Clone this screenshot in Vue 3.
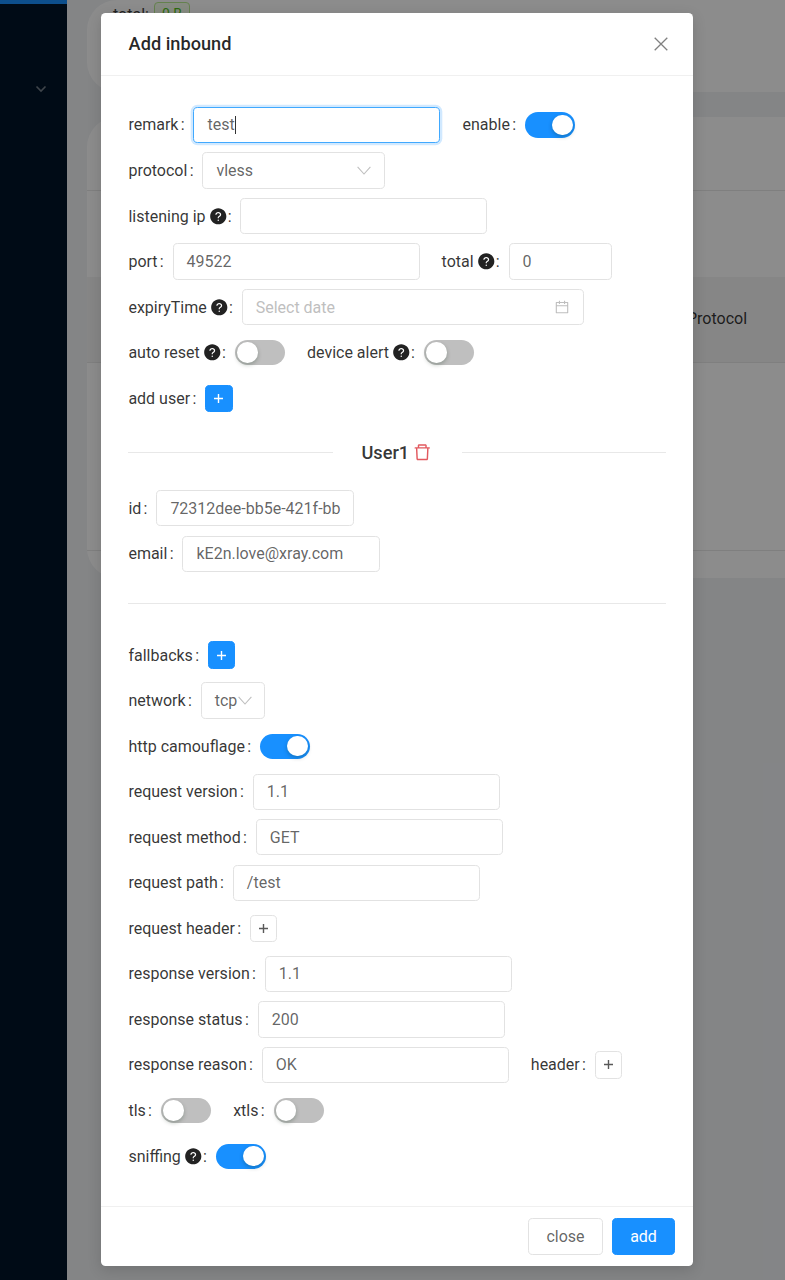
<script setup>
const helpPath = 'M512 64C264.6 64 64 264.6 64 512s200.6 448 448 448 448-200.6 448-448S759.4 64 512 64zm0 708c-22.1 0-40-17.9-40-40s17.9-40 40-40 40 17.9 40 40-17.9 40-40 40zm62.9-219.5a48.3 48.3 0 0 0-30.9 44.8V620c0 4.4-3.6 8-8 8h-48c-4.4 0-8-3.6-8-8v-21.5c0-23.1 6.7-45.9 19.9-64.9 12.9-18.6 30.9-32.8 52.1-40.9 34-13.1 56-41.6 56-72.7 0-44.1-43.1-80-96-80s-96 35.9-96 80v7.6c0 4.4-3.6 8-8 8h-48c-4.4 0-8-3.6-8-8V420c0-39.3 17.2-76 48.4-103.3C430.4 290.4 470 276 512 276s81.6 14.5 111.6 40.7C654.8 344 672 380.7 672 420c0 57.8-38.1 109.8-97.1 132.5z'
const trashPath = 'M360 184h-8c4.4 0 8-3.6 8-8v8h304v-8c0 4.4 3.6 8 8 8h-8v72h72v-80c0-35.3-28.7-64-64-64H352c-35.3 0-64 28.7-64 64v80h72v-72zm504 72H160c-17.7 0-32 14.3-32 32v32c0 4.4 3.6 8 8 8h60.4l24.7 523c1.6 34.1 29.8 61 63.9 61h454c34.2 0 62.3-26.8 63.9-61l24.7-523H888c4.4 0 8-3.6 8-8v-32c0-17.7-14.3-32-32-32zM731.3 840H292.7l-24.2-512h487l-24.2 512z'
const calendarPath = 'M880 184H712v-64c0-4.4-3.6-8-8-8h-56c-4.4 0-8 3.6-8 8v64H384v-64c0-4.4-3.6-8-8-8h-56c-4.4 0-8 3.6-8 8v64H144c-17.7 0-32 14.3-32 32v664c0 17.7 14.3 32 32 32h736c17.7 0 32-14.3 32-32V216c0-17.7-14.3-32-32-32zm-40 656H184V460h656v380zM184 392V256h128v48c0 4.4 3.6 8 8 8h56c4.4 0 8-3.6 8-8v-48h256v48c0 4.4 3.6 8 8 8h56c4.4 0 8-3.6 8-8v-48h128v136H184z'

const input = (label, value, w = 247, extra = {}) => ({ label, type: 'input', value, w, ...extra })
const sw = (label, on, extra = {}) => ({ label, type: 'switch', on, ...extra })
const btn = (label, primary) => ({ label, type: 'button', primary })

const form = [
  { kind: 'row', items: [input('remark', 'test', 247, { focus: true }), sw('enable', true)] },
  { kind: 'row', items: [{ label: 'protocol', type: 'select', value: 'vless', w: 183 }] },
  { kind: 'row', items: [input('listening ip', '', 247, { help: true })] },
  { kind: 'row', items: [input('port', '49522'), input('total', '0', 103, { help: true })] },
  { kind: 'row', items: [{ label: 'expiryTime', help: true, type: 'date', w: 342 }] },
  { kind: 'row', items: [sw('auto reset', false, { help: true }), sw('device alert', false, { help: true })] },
  { kind: 'row', items: [btn('add user', true)] },
  { kind: 'divider' },
  { kind: 'row', items: [input('id', '72312dee-bb5e-421f-bb', 198)] },
  { kind: 'row', items: [input('email', 'kE2n.love@xray.com', 198)] },
  { kind: 'hr' },
  { kind: 'row', items: [btn('fallbacks', true)] },
  { kind: 'row', items: [{ label: 'network', type: 'select', value: 'tcp', w: 64, tight: true }] },
  { kind: 'row', items: [sw('http camouflage', true)] },
  { kind: 'row', items: [input('request version', '1.1')] },
  { kind: 'row', items: [input('request method', 'GET')] },
  { kind: 'row', items: [input('request path', '/test')] },
  { kind: 'row', items: [btn('request header', false)] },
  { kind: 'row', items: [input('response version', '1.1')] },
  { kind: 'row', items: [input('response status', '200')] },
  { kind: 'row', items: [input('response reason', 'OK'), btn('header', false)] },
  { kind: 'row', items: [sw('tls', false), sw('xtls', false)] },
  { kind: 'row', items: [sw('sniffing', true, { help: true })] }
]
</script>

<template>
  <div class="layout">
    <aside class="sider">
      <div class="sider-top"></div>
      <svg class="sider-chevron" viewBox="0 0 12 8" width="12" height="8" fill="none"><path d="M1.5 1.500 6 6l4.500-4.500" /></svg>
    </aside>
    <main class="content">
      <section class="card card-stats">
        <div class="stat"><span>total:</span><span class="tag">0 B</span></div>
      </section>
      <section class="card card-table">
        <div class="card-head"></div>
        <div class="card-gap"></div>
        <div class="thead">Protocol</div>
        <div class="tbody"></div>
      </section>
    </main>

    <div class="mask"></div>

    <div class="modal">
      <header class="modal-head">
        <h2 class="modal-title">Add inbound</h2>
        <svg class="close" viewBox="0 0 14 14" width="14" height="14" fill="none"><path d="M.7.7l12.600 12.600M13.300.7.7 13.300" /></svg>
      </header>
      <div class="modal-body">
        <template v-for="(row, i) in form" :key="i">
          <div v-if="row.kind === 'divider'" class="divider">
            <span class="divider-line left"></span>
            <span class="divider-text">User1
              <svg class="trash" viewBox="0 0 1024 1024" width="20.500" height="20.500"><path :d="trashPath" /></svg>
            </span>
            <span class="divider-line right"></span>
          </div>
          <div v-else-if="row.kind === 'hr'" class="hr"></div>
          <div v-else class="row">
            <div v-for="item in row.items" :key="item.label" class="item">
              <label class="label">
                <span>{{ item.label }}</span>
                <svg v-if="item.help" class="help" viewBox="0 0 1024 1024" width="18.5" height="18.5"><path :d="helpPath" /></svg>
                <span class="colon" :class="{ 'after-help': item.help }">:</span>
              </label>

              <div v-if="item.type === 'input'" class="field" :class="{ focus: item.focus }" :style="{ width: item.w + 'px' }">
                <span>{{ item.value }}</span><i v-if="item.focus" class="caret"></i>
              </div>

              <div v-else-if="item.type === 'select'" class="field select" :class="{ tight: item.tight }" :style="{ width: item.w + 'px' }">
                <span>{{ item.value }}</span>
                <svg class="arrow" viewBox="0 0 14 9" width="14" height="9" fill="none"><path d="M.6.8 7 8l6.400-7.200" /></svg>
              </div>

              <div v-else-if="item.type === 'date'" class="field select" :style="{ width: item.w + 'px' }">
                <span class="placeholder">Select date</span>
                <svg class="calendar" viewBox="0 0 1024 1024" width="16" height="16"><path :d="calendarPath" /></svg>
              </div>

              <div v-else-if="item.type === 'switch'" class="switch" :class="{ on: item.on }"><i class="thumb"></i></div>

              <div v-else-if="item.type === 'button'" class="mini" :class="{ primary: item.primary }">
                <svg viewBox="0 0 9 9" width="9" height="9" fill="none"><path d="M4.500 0v9M0 4.500h9" /></svg>
              </div>
            </div>
          </div>
        </template>
      </div>
      <footer class="modal-foot">
        <button class="btn" type="button">close</button>
        <button class="btn btn-primary" type="button">add</button>
      </footer>
    </div>
  </div>
</template>

<style>
html, body { margin: 0; padding: 0; }
</style>

<style scoped>
.layout {
  position: relative;
  display: flex;
  width: 785px;
  height: 1280px;
  overflow: hidden;
  background: #f0f2f5;
  font-family: Roboto, "Liberation Sans", sans-serif;
  font-size: 16px;
  color: rgba(0, 0, 0, 0.8);
}
.sider {
  flex: none;
  width: 67px;
  background: #001529;
  display: flex;
  flex-direction: column;
  align-items: center;
}
.sider-top { align-self: stretch; height: 4px; background: #1890ff; }
.sider-chevron { margin: 81px 0 0 15px; stroke: rgba(255, 255, 255, 0.45); stroke-width: 1.6; }
.content {
  flex: none;
  width: 760px;
  padding-left: 20px;
  display: flex;
  flex-direction: column;
  gap: 25px;
}
.card { background: #fff; border-radius: 30px; }
.card-stats { height: 92px; box-sizing: border-box; padding: 3px 0 0 26px; }
.stat { display: flex; align-items: center; gap: 5px; height: 22px; color: rgba(0, 0, 0, 0.75); }
.tag {
  border: 1px solid #b7eb8f;
  background: #f6ffed;
  color: #52c41a;
  border-radius: 4px;
  padding: 0 7px;
  font-size: 14px;
  line-height: 22px;
}
.card-head { height: 73px; border-bottom: 1px solid #e8e8e8; }
.card-gap { height: 86px; }
.thead {
  height: 86px;
  line-height: 84px;
  background: #f5f5f5;
  padding-left: 600px;
  border-bottom: 1px solid #e8e8e8;
  box-sizing: border-box;
}
.tbody { height: 188px; border-bottom: 1px solid #e8e8e8; margin-bottom: 27px; box-sizing: border-box; }

.mask { position: absolute; inset: 0; background: rgba(0, 0, 0, 0.45); }

.modal {
  position: absolute;
  left: 101px;
  top: 13px;
  width: 592px;
  background: #fff;
  border-radius: 4.6px;
  box-shadow: 0 4px 14px rgba(0, 0, 0, 0.15);
}
.modal-head {
  height: 62.5px;
  box-sizing: border-box;
  display: flex;
  align-items: center;
  justify-content: space-between;
  padding: 0 25px 0 27.6px;
  border-bottom: 1px solid #f0f0f0;
}
.modal-title { margin: 0; font-size: 18.2px; font-weight: 500; line-height: 1; color: rgba(0, 0, 0, 0.85); }
.close { stroke: #808080; stroke-width: 1.3; }

.modal-body { padding: 26.7px 27.4px 27.2px; }
.row { display: flex; align-items: center; gap: 22px; height: 45.55px; }
.item { display: flex; align-items: center; height: 36.4px; }
.label { display: flex; align-items: center; white-space: nowrap; margin-right: 8.9px; }
.help { margin-left: 3px; fill: #222; }
.colon { margin-left: 2.3px; }
.colon.after-help { margin-left: 0.6px; }

.field {
  box-sizing: border-box;
  height: 36.4px;
  display: flex;
  align-items: center;
  padding: 0 13px;
  border: 1px solid #e2e2e2;
  border-radius: 4.6px;
  color: rgba(0, 0, 0, 0.62);
  background: #fff;
  white-space: nowrap;
  overflow: hidden;
}
.field.focus { border-color: #40a9ff; box-shadow: 0 0 0 2.3px rgba(24, 144, 255, 0.2); }
.caret { display: block; width: 1px; height: 18px; background: #333; }
.select { justify-content: space-between; }
.select.tight { padding-right: 12px; }
.arrow { stroke: #bfbfbf; stroke-width: 1.1; flex: none; }
.calendar { fill: #bfbfbf; flex: none; }
.placeholder { color: #bfbfbf; }

.switch {
  position: relative;
  width: 50.3px;
  height: 25.1px;
  border-radius: 13px;
  background: #bfbfbf;
}
.switch.on { background: #1890ff; }
.thumb {
  position: absolute;
  top: 2.3px;
  left: 2.3px;
  width: 20.6px;
  height: 20.6px;
  border-radius: 50%;
  background: #fff;
  box-shadow: 0 2px 4px rgba(0, 35, 11, 0.25);
}
.switch.on .thumb { left: auto; right: 2.3px; }

.mini {
  box-sizing: border-box;
  width: 27.4px;
  height: 27.4px;
  display: flex;
  align-items: center;
  justify-content: center;
  border: 1px solid #e2e2e2;
  border-radius: 4.6px;
  stroke: #595959;
  stroke-width: 1.4;
  background: #fff;
}
.mini.primary { background: #1890ff; border-color: #1890ff; stroke: #fff; }

.divider { display: flex; align-items: center; height: 64.4px; box-sizing: border-box; padding-bottom: 2px; }
.divider-line { height: 1px; background: #e8e8e8; }
.divider-line.left { width: 205px; }
.divider-line.right { flex: 1; }
.divider-text {
  display: flex;
  align-items: center;
  gap: 3px;
  padding: 0 29px 0 28px;
  font-size: 18.2px;
  font-weight: 500;
}
.trash { fill: #e2595f; }
.hr { height: 1px; background: #e8e8e8; margin: 26.6px 0 28.2px; }

.modal-foot {
  box-sizing: border-box;
  height: 60px;
  display: flex;
  justify-content: flex-end;
  align-items: flex-start;
  gap: 9px;
  padding: 11.4px 18px 0 0;
  border-top: 1px solid #f0f0f0;
}
.btn {
  height: 36.4px;
  box-sizing: border-box;
  border: 1px solid #e2e2e2;
  border-radius: 4.6px;
  background: #fff;
  color: rgba(0, 0, 0, 0.62);
  font: inherit;
  padding: 0;
  width: 75px;
}
.btn-primary { width: 63px; background: #1890ff; border-color: #1890ff; color: #fff; }
</style>
